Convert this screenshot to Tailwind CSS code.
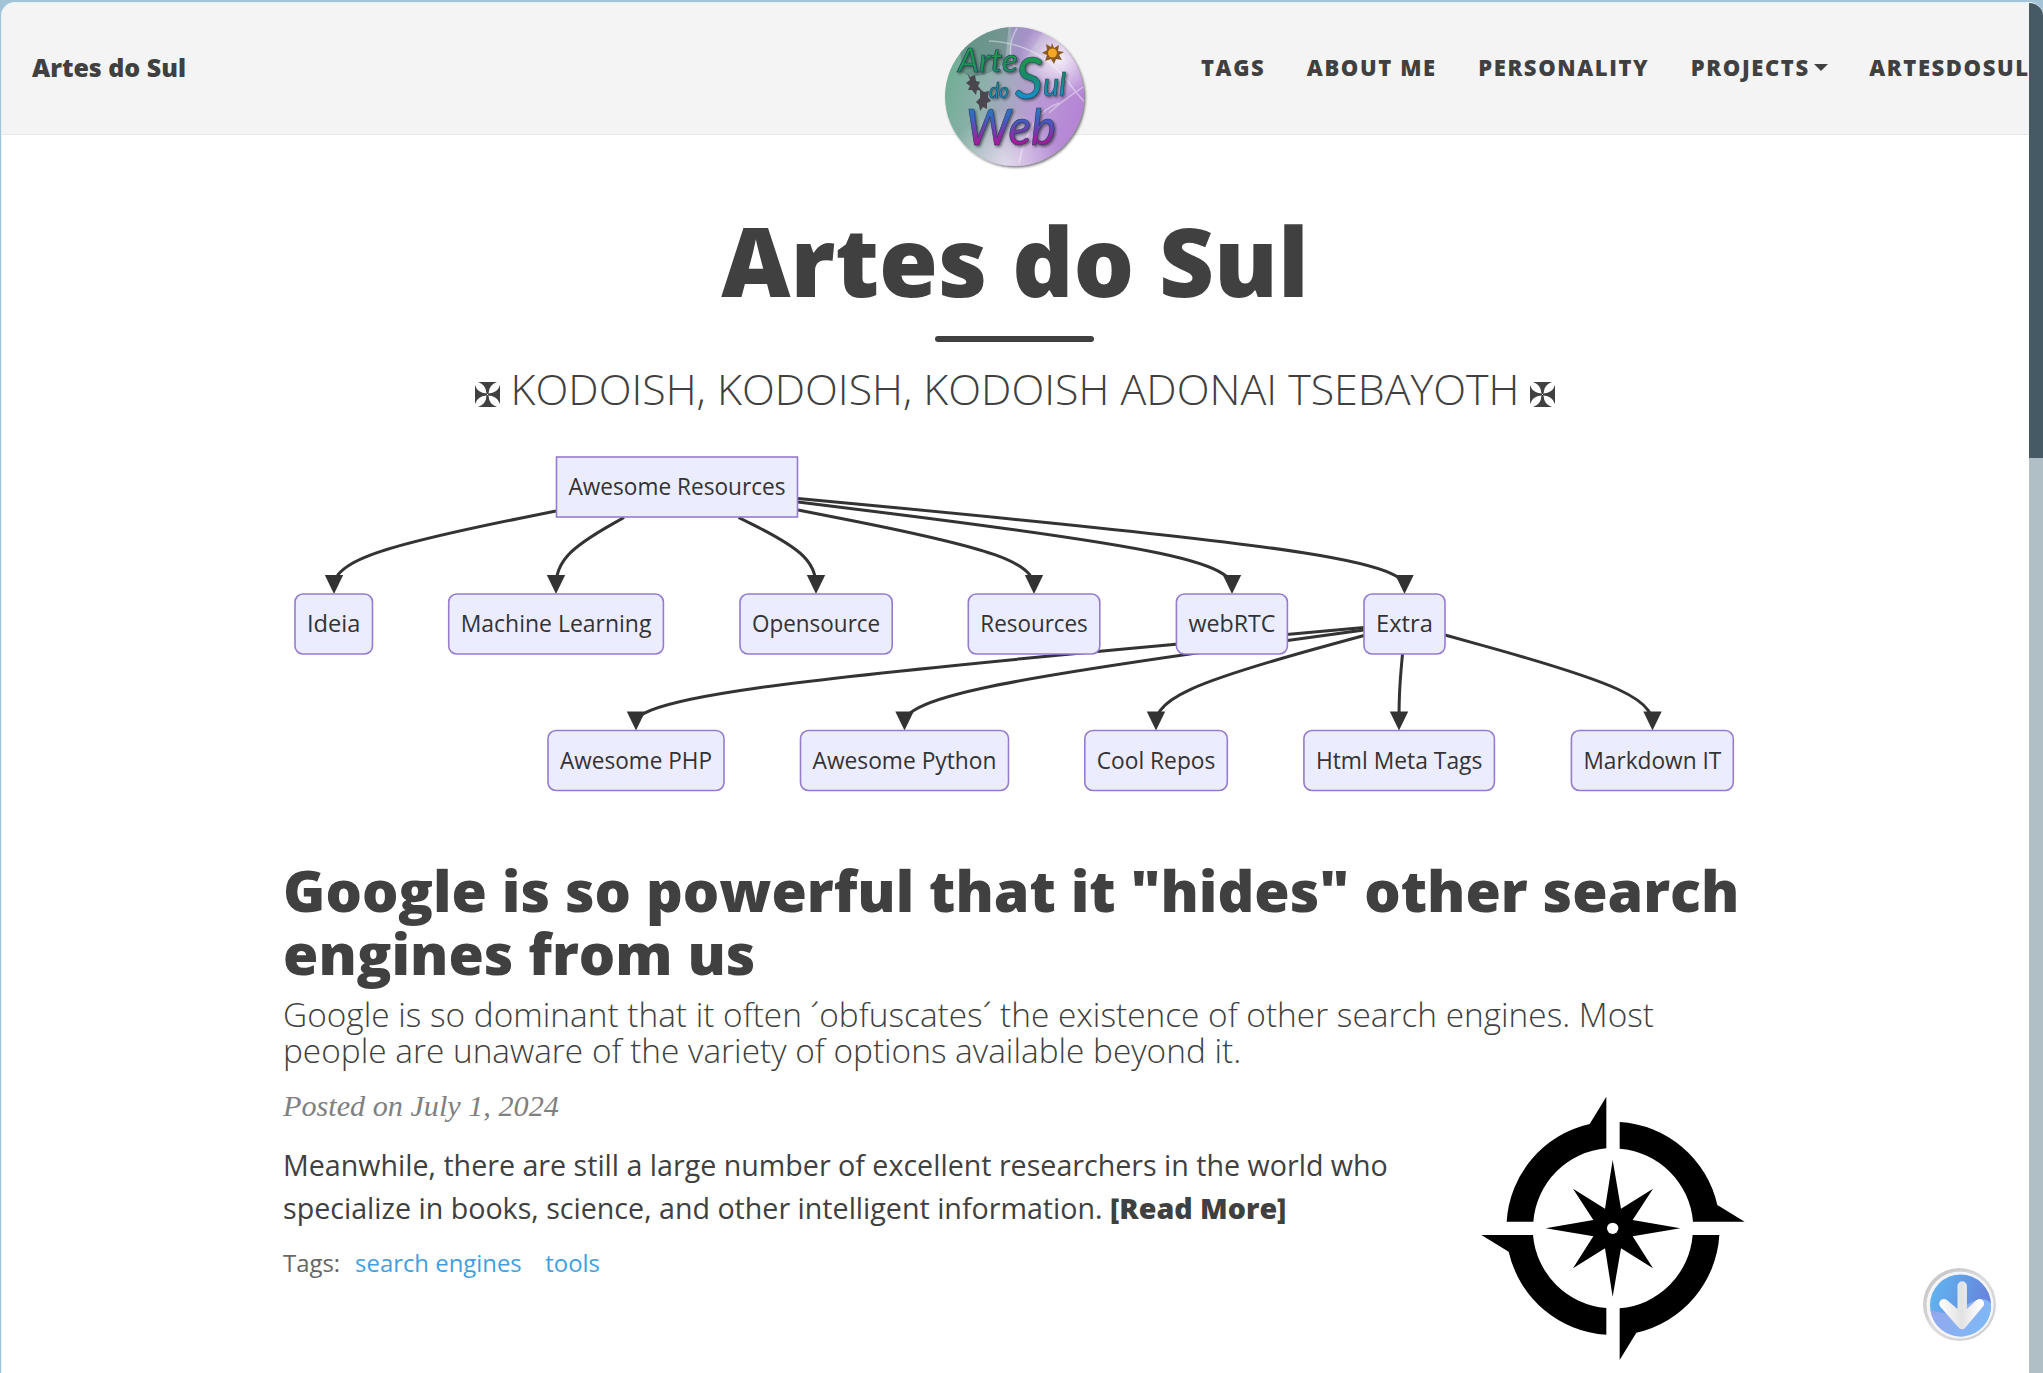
<!DOCTYPE html>
<html lang="en">
<head>
<meta charset="utf-8">
<title>Artes do Sul</title>
<script src="https://cdn.jsdelivr.net/npm/@tailwindcss/browser@4"></script>
</head>
<body class="h-[1373px] w-[2043px] overflow-hidden bg-[#a3c3d6] pt-[2px] pl-[1px] font-['Open_Sans',sans-serif] text-[#404040]">
<div class="flex h-[1371px] w-[2042px] overflow-hidden rounded-t-[14px] border-t border-l border-[#e6f2f9] bg-white">
  <div class="relative w-[2027px] shrink-0 overflow-hidden">
    <header class="flex h-[132px] justify-between border-b border-[#e8e8e8] bg-[#f4f4f4] pt-[46px] pl-[30px]">
      <a class="h-9 text-[25px] leading-9 font-extrabold whitespace-nowrap">Artes do Sul</a>
      <nav class="flex h-9 w-[828px] shrink-0 gap-[41.5px] text-[22px] leading-9 font-extrabold tracking-[1.6px] whitespace-nowrap uppercase">
        <a>Tags</a><a>About Me</a><a>Personality</a>
        <a class="flex items-center">Projects<i class="ml-[4px] border-x-[7px] border-t-[7px] border-x-transparent border-t-[#404040]"></i></a>
        <a>ArtesDoSul</a>
      </nav>
    </header>
    <svg class="absolute top-[20px] left-[937px]" width="152" height="152" viewBox="0 0 152 152">
      <defs>
        <linearGradient id="orb" x1="0" y1=".35" x2="1" y2=".6"><stop offset="0" stop-color="#6fae94"/><stop offset=".3" stop-color="#8fb0ac"/><stop offset=".5" stop-color="#aaa6c4"/><stop offset=".65" stop-color="#b99bd4"/><stop offset="1" stop-color="#b583d6"/></linearGradient>
        <radialGradient id="glow"><stop offset="0" stop-color="#fff"/><stop offset="1" stop-color="#fff" stop-opacity="0"/></radialGradient>
        <linearGradient id="ink" gradientUnits="userSpaceOnUse" x1="0" y1="30" x2="0" y2="130"><stop offset="0" stop-color="#1f9d4a"/><stop offset=".22" stop-color="#178c62"/><stop offset=".42" stop-color="#1590c4"/><stop offset=".65" stop-color="#3b62c4"/><stop offset=".92" stop-color="#b3129a"/></linearGradient>
        <clipPath id="disc"><circle cx="75.500" cy="73.500" r="69.500"/></clipPath>
        <filter id="sh" x="-20%" y="-20%" width="140%" height="140%"><feDropShadow dx="1.500" dy="1.500" stdDeviation="1.200" flood-color="#222" flood-opacity=".6"/></filter>
      </defs>
      <circle cx="75.500" cy="73.500" r="69.500" fill="url(#orb)" filter="url(#sh)"/>
      <g clip-path="url(#disc)">
        <path d="M20 20Q50 0 70 0L66 40Q40 60 24 50Z" fill="#456e68" opacity=".4"/>
        <path d="M72 0H110L84 40H72Z" fill="#a06cd0" opacity=".35"/>
        <circle cx="120" cy="36" r="40" fill="url(#glow)" opacity=".85"/>
        <circle cx="66" cy="142" r="55" fill="url(#glow)" opacity=".6"/>
        <path d="M78 5Q66 25 76 45M50 18Q100 20 130 60T150 70M120 80Q90 90 80 140M150 60Q120 80 110 90" fill="none" stroke="#fff" stroke-width="1.500" opacity=".4"/>
      </g>
      <g filter="url(#sh)" fill="url(#ink)" stroke="#20425c" stroke-width=".6" font-family="Lato" font-weight="500" font-style="italic">
        <text x="19" y="49" font-size="33" textLength="60" lengthAdjust="spacingAndGlyphs">Arte</text>
        <text x="76" y="76" font-size="58" textLength="28" lengthAdjust="spacingAndGlyphs">S</text>
        <text x="104" y="73" font-size="33" textLength="23" lengthAdjust="spacingAndGlyphs">ul</text>
        <text x="50" y="75" font-size="22" textLength="20" lengthAdjust="spacingAndGlyphs">do</text>
        <text x="27" y="122" font-size="50" textLength="90" lengthAdjust="spacingAndGlyphs">Web</text>
      </g>
      <path d="M28 50l3 4 5-2 1 6 4 1-2 4 4 5-5-1-1 5-4-5-4 0 2-4-4-3 4-3zM41 66l4 3 5-1-1 6 3 4-4 2 0 6-4-2-3 4-1-6-3-3 4-4z" fill="#3f3440" opacity=".85"/>
      <path d="M113 20l2 5 5-3-1 6 6 1-5 3 3 5-6-1-2 5-3-5-6 2 2-6-5-2 5-3-1-6 5 3z" fill="#8a5a20"/><circle cx="113.500" cy="30" r="4.500" fill="#f5a623"/>
    </svg>

    <main>
      <h1 class="mt-[77px] pr-[1px] text-center text-[95.4px] leading-[96px] font-extrabold">Artes do Sul</h1>
      <div class="relative -left-px mx-auto mt-[28px] h-[6px] w-[159px] rounded-[3px] bg-[#404040]"></div>
      <p class="mt-[23px] flex h-12 items-center justify-center gap-[11px] pr-[1px] text-[42.95px] leading-[48px] font-light whitespace-nowrap">
        <svg class="mt-[10px]" width="25" height="25" viewBox="0 0 25 25"><g id="cross" fill="#404040"><path id="arms" d="M3 0H22Q14 2.500 13.500 11.500L13 13H12L11.500 11.500Q11 2.500 3 0ZM3 25H22Q14 22.500 13.500 13.500L13 12H12L11.500 13.500Q11 22.500 3 25Z"/><use href="#arms" transform="rotate(90 12.500 12.500)"/></g></svg>
        <span>KODOISH, KODOISH, KODOISH ADONAI TSEBAYOTH</span>
        <svg class="mt-[10px]" width="25" height="25" viewBox="0 0 25 25"><use href="#cross"/></svg>
      </p>

      <svg id="graph" class="mt-[27px] ml-[278px] block" width="1480" height="370" viewBox="280 440 1480 370">
        <g id="edges" fill="none" stroke="#333" stroke-width="3"></g>
        <g id="heads" fill="#333"></g>
        <g id="nodes" fill="#ececff" stroke="#957ccc" stroke-width="1.600"></g>
        <g id="labels" fill="#333" font-family="Open Sans" font-size="24.500" text-anchor="middle"></g>
      </svg>

      <article class="mt-[49px] ml-[281px] w-[1461.5px]">
        <h2 class="text-[57.27px] leading-[63px] font-extrabold whitespace-nowrap">Google is so powerful that it "hides" other search<br>engines from us</h2>
        <h3 class="mt-[11px] text-[33.4px] leading-9 font-light whitespace-nowrap">Google is so dominant that it often ´obfuscates´ the existence of other search engines. Most<br>people are unaware of the variety of options available beyond it.</h3>
        <div class="flex justify-between pt-[18px]">
          <div>
            <p class="font-['Liberation_Serif',serif] text-[30.2px] leading-10 text-[#808080] italic">Posted on July 1, 2024</p>
            <p class="mt-[17px] text-[28.63px] leading-[43px] whitespace-nowrap">Meanwhile, there are still a large number of excellent researchers in the world who<br>specialize in books, science, and other intelligent information. <a class="font-extrabold">[Read More]</a></p>
            <p class="mt-[18px] flex text-[23.9px] leading-8 text-[#666]">Tags:<a class="ml-[15px] text-[#3f9fe0]">search engines</a><a class="ml-[23.5px] text-[#3f9fe0]">tools</a></p>
          </div>
          <svg class="mt-[10px] shrink-0" width="264" height="264" viewBox="62 48 792 792">
            <g id="quarter"><path d="M438 50V205A240 240 0 0 0 219 425H139A320 320 0 0 1 388 132Z"/></g>
            <use href="#quarter" transform="rotate(90 458 445)"/><use href="#quarter" transform="rotate(180 458 445)"/><use href="#quarter" transform="rotate(270 458 445)"/>
            <path d="M457 240L482 386 578 326 517 420 660 445 517 469 578 565 482 505 457 650 434 505 338 565 399 469 256 445 399 420 338 326 434 386Z"/>
            <circle cx="457" cy="445" r="17" fill="#fff"/>
          </svg>
        </div>
      </article>
    </main>

    <svg class="absolute top-[1263px] left-[1919px]" width="76" height="76" viewBox="0 0 76 76">
      <defs>
        <linearGradient id="rim" x1="0" y1="0" x2="1" y2="1"><stop offset="0" stop-color="#c0c0c0"/><stop offset=".5" stop-color="#dcdcde"/><stop offset="1" stop-color="#ccccd0"/></linearGradient>
        <linearGradient id="sky" x1="0" y1=".2" x2="1" y2=".5"><stop offset="0" stop-color="#60b6f0"/><stop offset="1" stop-color="#6880dc"/></linearGradient>
        <linearGradient id="pool" x1="0" y1="0" x2="1" y2=".4"><stop offset="0" stop-color="#9aa4ec"/><stop offset="1" stop-color="#7fb8f6"/></linearGradient>
        <linearGradient id="shaft" gradientUnits="userSpaceOnUse" x1="17" y1="0" x2="60" y2="0"><stop offset="0" stop-color="#fff"/><stop offset=".55" stop-color="#e2e2e2"/><stop offset="1" stop-color="#fff"/></linearGradient>
      </defs>
      <circle cx="38.500" cy="38.500" r="36.500" fill="url(#rim)"/><circle cx="39" cy="39" r="33.500" fill="#f6f6fa"/>
      <circle cx="39.500" cy="39" r="30.500" fill="url(#sky)"/>
      <path d="M9.300 43.500Q26 52 44 40T70 37.500A30.500 30.500 0 0 1 9.300 43.500Z" fill="url(#pool)"/>
      <path d="M36.500 20a4.700 4.700 0 0 1 9.400 0V43L55 34.500a4.500 4.500 0 0 1 7 6L44 62Q41 64.500 38 62L19.500 41a4.500 4.500 0 0 1 7-6.500L36.500 43Z" fill="url(#shaft)"/>
    </svg>
  </div>
  <div class="w-[14px] shrink-0 bg-[#b0bec5]"><div class="h-[455px] bg-[#455a64]"></div></div>
</div>
<script>
const nodes = [
  ['Awesome Resources', 556.5, 797.5, 457, 0], ['Ideia', 295, 372.5, 594, 8], ['Machine Learning', 448.7, 663.4, 594, 8],
  ['Opensource', 740, 892.2, 594, 8], ['Resources', 968.3, 1099.8, 594, 8], ['webRTC', 1176.4, 1287.4, 594, 8],
  ['Extra', 1364, 1445, 594, 8], ['Awesome PHP', 548, 724, 730.5, 8], ['Awesome Python', 800.5, 1008.5, 730.5, 8],
  ['Cool Repos', 1084.8, 1227.3, 730.5, 8], ['Html Meta Tags', 1303.9, 1494.4, 730.5, 8], ['Markdown IT', 1571.4, 1733.3, 730.5, 8]];
const edges = [
  [556, 511, 334, 594], [624, 517.5, 556, 594], [738.5, 517.5, 816, 594], [798, 510, 1034, 594], [798, 502, 1232, 594], [798, 498.5, 1404.5, 594],
  [1364, 627.5, 636, 730.5], [1364, 630, 904.5, 730.5], [1364, 635.5, 1156, 730.5], [1402.5, 654, 1399, 730.5], [1445, 635, 1652.5, 730.5]];
// B-spline through start, mid-rank point and arrow tip
document.getElementById('edges').innerHTML = edges.map(([x, y, cx, ty]) => {
  const my = ty - 38, ey = ty - 10, k = (a, b, n) => (a * (n - 1) + b) / n;
  return `<path d="M${x} ${y}L${k(x, cx, 6)} ${k(y, my, 6)}C${k(x, cx, 3)} ${k(y, my, 3)} ${(x + 2 * cx) / 3} ${(y + 2 * my) / 3} ${(x + 5 * cx) / 6} ${(y + 4 * my + ty) / 6}C${cx} ${(2 * my + ty) / 3} ${cx} ${(my + 2 * ty) / 3} ${cx} ${(my + 5 * ty) / 6}V${ey}"/>`;
}).join('');
document.getElementById('heads').innerHTML = edges.map(([, , cx, ty]) => `<path d="M${cx - 9.2} ${ty - 19}h18.4L${cx} ${ty}z"/>`).join('');
document.getElementById('nodes').innerHTML = nodes.map(([, a, b, y, r]) => `<rect x="${a}" y="${y}" width="${b - a}" height="60" rx="${r}"/>`).join('');
document.getElementById('labels').innerHTML = nodes.map(([t, a, b, y]) => `<text x="${(a + b) / 2}" y="${y + 38}" textLength="${b - a - 24}" lengthAdjust="spacingAndGlyphs">${t}</text>`).join('');
</script>
</body>
</html>
